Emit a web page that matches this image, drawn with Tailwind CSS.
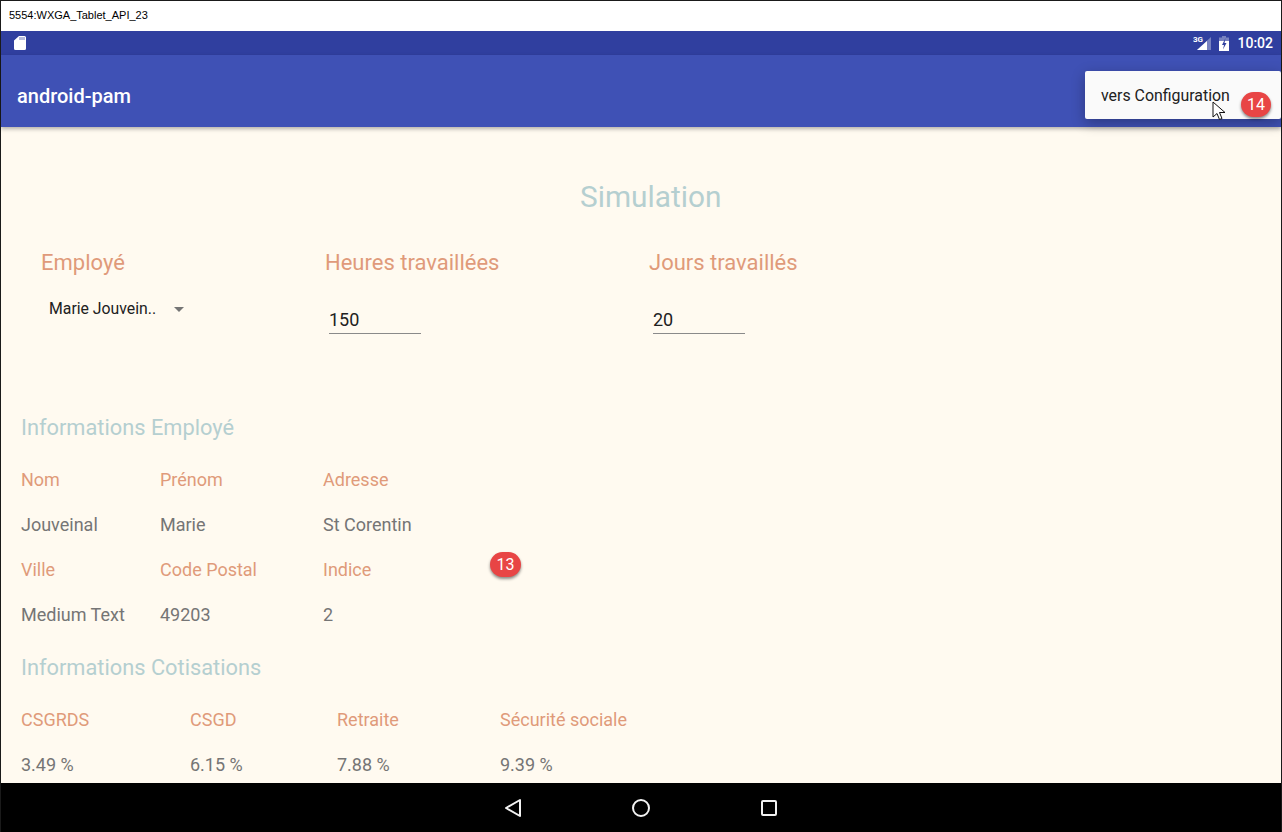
<!DOCTYPE html>
<html lang="en">
<head>
    <meta charset="UTF-8" />
    <title>5554:WXGA_Tablet_API_23</title>
    <script src="https://cdn.jsdelivr.net/npm/@tailwindcss/browser@4"></script>
</head>
<body class="w-[1282px] h-[832px] overflow-hidden bg-white font-['Roboto',sans-serif]">
<div class="relative w-full h-full flex flex-col border border-[#1a1a1a] border-b-0">

    <!-- Window title -->
    <div class="h-[30px] shrink-0 bg-white flex items-center pl-2 pb-[2px] text-[11px] text-black font-['Liberation_Sans',sans-serif]">5554:WXGA_Tablet_API_23</div>

    <!-- Status bar -->
    <div class="h-[24px] shrink-0 bg-[#303f9f] flex items-center justify-between pl-[13px] pr-2 text-white">
        <svg width="12" height="14" viewBox="0 0 12 14"><path fill="#fff" d="M5 0h5.500A1.500 1.500 0 0 1 12 1.500V12.500A1.500 1.500 0 0 1 10.500 14H1.500A1.500 1.500 0 0 1 0 12.500V4.500Z"/><path stroke="#303f9f" stroke-width=".7" d="M6 1v3M8 1v3M10 1v3"/></svg>
        <div class="flex items-center">
            <svg width="18" height="16" viewBox="0 0 18 16"><path fill="#fff" d="M18 2v13H4Z" opacity=".35"/><path fill="#fff" d="M14 6v9H4Z"/><text x="0" y="7" fill="#fff" font-size="8" font-weight="700" font-family="Roboto">3G</text></svg>
            <svg class="ml-[8px]" width="10" height="15" viewBox="0 0 10 15"><path fill="#fff" opacity=".35" d="M3 0h4v1.500h3V15H0V1.500h3Z"/><path fill="#fff" d="M0 5h10v10H0Z"/><path fill="#303f9f" d="M6.500 2 3 9h2l-1 4.500L7.500 7h-2Z"/></svg>
            <span class="ml-[8px] text-[14px] font-medium leading-none">10:02</span>
        </div>
    </div>

    <!-- App bar -->
    <div class="h-[72px] shrink-0 bg-[#3f51b5] flex items-center pl-4 pt-[10px] shadow-[0_2px_4px_rgba(0,0,0,0.3)] z-10">
        <span class="text-[20px] font-medium text-white">android-pam</span>
    </div>

    <!-- Content -->
    <main class="flex-1 min-h-0 overflow-hidden bg-[#fffaf0]">
        <h1 class="mt-[50px] ml-[579px] text-[29.800px] leading-[40px] text-[#b5cfd0]">Simulation</h1>

        <div class="mt-[31px] flex text-[22px] leading-[30px] text-[#e09a7a]">
            <div class="w-[324px] pl-10">
                <div>Employé</div>
                <div class="mt-[19px] pl-2 flex items-center text-[15.800px] leading-6 text-[#212121]">
                    <span>Marie Jouvein..</span>
                    <span class="ml-[18px] w-0 h-0 border-x-[5px] border-x-transparent border-t-[5px] border-t-[#757575]"></span>
                </div>
            </div>
            <div class="w-[324px]">
                <div>Heures travaillées</div>
                <div class="mt-[29px] ml-1 w-[92px] h-[27px] pl-0 border-b border-[#8a8a8a] text-[18px] leading-[26px] text-[#212121]">150</div>
            </div>
            <div>
                <div>Jours travaillés</div>
                <div class="mt-[29px] ml-1 w-[92px] h-[27px] border-b border-[#8a8a8a] text-[18px] leading-[26px] text-[#212121]">20</div>
            </div>
        </div>

        <section class="mt-[79px] pl-5">
            <h2 class="text-[21.800px] leading-[30px] text-[#b5cfd0]">Informations Employé</h2>
            <div class="mt-[14px] grid grid-cols-[139px_163px_1fr] text-[18px] leading-[45px] text-[#757575]">
                <div class="text-[#e09a7a]">Nom</div><div class="text-[#e09a7a]">Prénom</div><div class="text-[#e09a7a]">Adresse</div>
                <div>Jouveinal</div><div>Marie</div><div>St Corentin</div>
                <div class="text-[#e09a7a]">Ville</div><div class="text-[#e09a7a]">Code Postal</div><div class="text-[#e09a7a]">Indice</div>
                <div>Medium Text</div><div>49203</div><div>2</div>
            </div>
        </section>

        <section class="mt-[16px] pl-5">
            <h2 class="text-[21.800px] leading-[30px] text-[#b5cfd0]">Informations Cotisations</h2>
            <div class="mt-[14px] grid grid-cols-[169px_147px_163px_1fr] text-[18px] leading-[45px] text-[#757575]">
                <div class="text-[#e09a7a]">CSGRDS</div><div class="text-[#e09a7a]">CSGD</div><div class="text-[#e09a7a]">Retraite</div><div class="text-[#e09a7a]">Sécurité sociale</div>
                <div>3.49 %</div><div>6.15 %</div><div>7.88 %</div><div>9.39 %</div>
            </div>
        </section>
    </main>

    <!-- Navigation bar -->
    <div class="h-[49px] shrink-0 bg-black flex items-center pl-[503px]">
        <svg width="18" height="20" viewBox="0 0 18 20"><path d="M16 2v16L2 10Z" fill="none" stroke="#f2f2f2" stroke-width="2" stroke-linejoin="round"/></svg>
        <svg width="18" height="18" viewBox="0 0 18 18" class="ml-[110px]"><circle cx="9" cy="9" r="8" fill="none" stroke="#f2f2f2" stroke-width="2"/></svg>
        <svg width="16" height="16" viewBox="0 0 16 16" class="ml-[111px]"><rect x="1" y="1" width="14" height="14" rx="1" fill="none" stroke="#f2f2f2" stroke-width="2"/></svg>
    </div>

    <!-- Overflow menu -->
    <div class="absolute left-[1084px] top-[70px] w-[196px] h-[48px] bg-[#fafafa] rounded-[2px] shadow-[0_4px_14px_rgba(0,0,0,0.3)] z-20 pl-4 pt-[13px] text-[15.900px] leading-[24px] text-[#212121]">vers Configuration</div>

    <!-- Mouse pointer -->
    <svg class="absolute left-[1211px] top-[100px] z-30" width="14" height="20" viewBox="0 0 14 20"><path d="M1 1v15l4-3.500 2.500 6 2.500-1-2.500-6H13Z" fill="#fff" stroke="#111" stroke-width="1"/></svg>

    <!-- Annotation badges -->
    <div class="absolute left-[1240px] top-[91px] z-30 w-[30px] h-[25px] rounded-full bg-[#e84545] shadow-[0_2px_3px_rgba(0,0,0,0.45)] flex items-center justify-center text-[16px] text-white">14</div>
    <div class="absolute left-[489px] top-[551px] z-30 w-[31px] h-[25px] rounded-full bg-[#e84545] shadow-[0_2px_3px_rgba(0,0,0,0.45)] flex items-center justify-center text-[16px] text-white">13</div>
</div>
</body>
</html>
